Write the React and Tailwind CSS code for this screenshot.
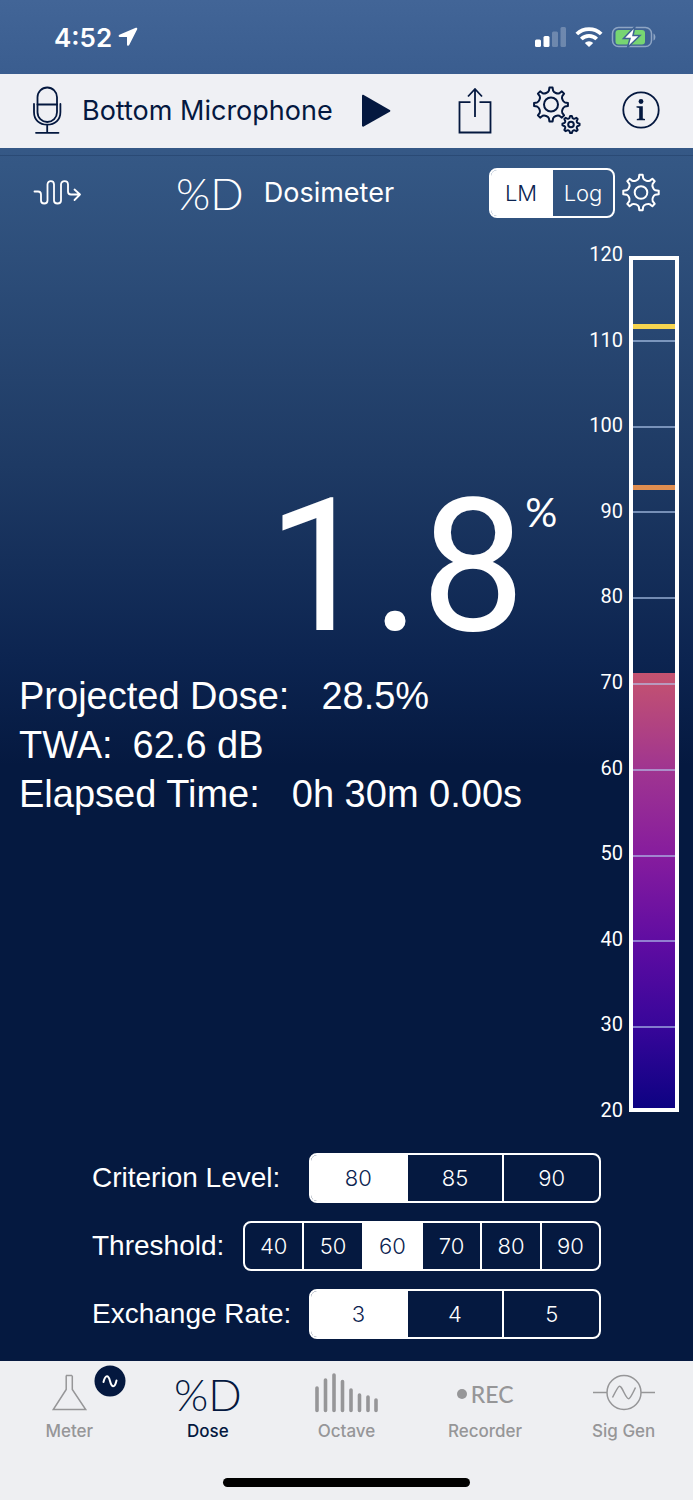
import { useState } from 'react';

const SCALE_MIN = 20;
const SCALE_MAX = 120;
const SCALE_LABELS = [120, 110, 100, 90, 80, 70, 60, 50, 40, 30, 20];

const toPercent = (db) => `${((db - SCALE_MIN) / (SCALE_MAX - SCALE_MIN)) * 100}%`;

// Outline of a cog: narrow teeth with scooped valleys between them
function gearPath(cx, cy, outer, inner, teeth) {
    const at = (angle, r) => `${(cx + r * Math.sin(angle)).toFixed(2)} ${(cy - r * Math.cos(angle)).toFixed(2)}`;
    const step = (Math.PI * 2) / teeth;
    let d = '';
    for (let i = 0; i < teeth; i++) {
        const a = i * step;
        d += `${i === 0 ? 'M' : 'L'}${at(a - step * 0.12, outer)} `;
        d += `L${at(a + step * 0.12, outer)} `;
        d += `L${at(a + step * 0.19, inner + 1)} `;
        d += `C${at(a + step * 0.3, inner - 0.8)} ${at(a + step * 0.7, inner - 0.8)} ${at(a + step * 0.81, inner + 1)} `;
    }
    return d + 'Z';
}

function GearIcon() {
    return (
        <svg viewBox="0 0 40 40" className="h-10 w-10" fill="none" stroke="currentColor" strokeWidth="2" strokeLinejoin="round">
            <path d={gearPath(20, 19.5, 17.8, 13.5, 8)} />
            <circle cx="20" cy="19.5" r="6.3" />
        </svg>
    );
}

function GearsIcon() {
    return (
        <svg viewBox="0 0 50 50" className="h-[50px] w-[50px]" fill="none" stroke="currentColor" strokeWidth="2" strokeLinejoin="round">
            <path d={gearPath(19, 19.5, 17, 13, 8)} />
            <circle cx="19" cy="19.5" r="7" />
            <path d={gearPath(39, 39.5, 8.6, 6.8, 8)} />
            <circle cx="39" cy="39.5" r="2.8" />
        </svg>
    );
}

function StatusBar() {
    return (
        <div className="flex h-[74px] items-center justify-between pr-9 pl-[54px] text-white">
            <div className="flex items-center gap-1.5 font-[Inter] text-[26px] font-semibold">
                4:52
                <svg viewBox="0 0 20 20" className="h-5 w-5" fill="currentColor">
                    <path d="M17.8 0.8 1.4 7.8c-1.2.6-.9 2.2.4 2.2h7.2v7.4c0 1.4 1.6 1.7 2.2.5L19.2 2.2c.4-1-.4-1.8-1.400-1.400z" />
                </svg>
            </div>
            <div className="flex items-center gap-2">
                <svg viewBox="0 0 32 20" className="h-5 w-8" fill="currentColor">
                    <rect x="0" y="12.5" width="6" height="7.5" rx="1.5" />
                    <rect x="8.5" y="9" width="6" height="11" rx="1.5" />
                    <rect x="17" y="4.5" width="6" height="15.5" rx="1.5" opacity=".25" />
                    <rect x="25.5" y="0" width="5.5" height="20" rx="1.5" opacity=".25" />
                </svg>
                <svg viewBox="0 0 28 20" className="h-5 w-7" fill="none" stroke="currentColor" strokeWidth="3.8">
                    <path d="M1.8 7a17.5 17.5 0 0 1 24.4 0" />
                    <path d="M6.3 12a11 11 0 0 1 15.4 0" />
                    <path d="M14 20 9.8 16a6 6 0 0 1 8.4 0z" fill="currentColor" stroke="none" />
                </svg>
                <svg viewBox="0 0 46 22" className="h-[22px] w-[46px]">
                    <rect x="1.5" y="1.5" width="39" height="19" rx="6" fill="none" stroke="#8ea5c4" strokeWidth="1.5" />
                    <rect x="4.5" y="4" width="29.5" height="14.5" rx="3" fill="#77d572" />
                    <path d="M42.5 7.5v7c2.5-1 2.5-6 0-7z" fill="#8ea5c4" />
                    <path d="M24 0.5 12.5 12.5H19L16.5 21.5 29 9.5H22z" fill="#fff" stroke="#3f6293" strokeWidth="1.5" />
                </svg>
            </div>
        </div>
    );
}

function Toolbar() {
    return (
        <header className="flex h-[74px] items-center bg-[#eff0f4] pr-[33px] pl-8 text-[#04183f]">
            <button type="button" aria-label="Input" className="mr-5">
                <svg viewBox="0 0 30 50" className="h-[50px] w-[30px]" fill="none" stroke="currentColor" strokeWidth="1.8" strokeLinecap="round">
                    <rect x="5.5" y="1.5" width="19.5" height="34.5" rx="9.7" />
                    <path d="M5.5 18.5H25M2 18v8c0 8 5.5 12.7 13.2 12.7s13.2-4.7 13.2-12.7v-8M15.2 39v7.500M4 46.8h22.5" />
                </svg>
            </button>
            <h1 className="font-[Inter] text-[27px]">Bottom Microphone</h1>
            <button type="button" aria-label="Play" className="ml-7">
                <svg viewBox="0 0 32 34" className="h-[34px] w-8" fill="currentColor">
                    <path d="M1 2c0-1 .8-1.5 1.7-1L28.8 16c.8.5.8 1.2 0 1.7L2.7 32.500c-.9.5-1.7 0-1.7-1z" />
                </svg>
            </button>
            <div className="ml-auto flex items-center gap-10 pb-0.5">
                <button type="button" aria-label="Share">
                    <svg viewBox="0 0 34 48" className="h-12 w-[34px]" fill="none" stroke="currentColor" strokeWidth="1.8">
                        <path d="M12.5 16.2H1.5V46.5h31V16.2h-11M17 31V3M10 10.500l7-7.500 7 7.500" />
                    </svg>
                </button>
                <button type="button" aria-label="Settings">
                    <GearsIcon />
                </button>
                <button type="button" aria-label="Info">
                    <svg viewBox="0 0 38 38" className="h-[38px] w-[38px]">
                        <circle cx="19" cy="19" r="17.7" fill="none" stroke="currentColor" strokeWidth="1.8" />
                        <circle cx="19" cy="10.5" r="2.4" fill="currentColor" />
                        <path d="M14.5 15.2h6.3v12.3l2.2.6v1.2h-8.2v-1.2l2.4-.6V17l-2.7-.6z" fill="currentColor" />
                    </svg>
                </button>
            </div>
        </header>
    );
}

function Segmented({ label, options, value, onChange, className }) {
    return (
        <div role="group" aria-label={label} className={`flex h-[50px] overflow-hidden rounded-lg border-2 border-white font-[Inter] text-[22px] font-light ${className}`}>
            {options.map((option, i) => (
                <button
                    key={option}
                    type="button"
                    aria-pressed={option === value}
                    onClick={() => onChange(option)}
                    className={`flex-1 ${i > 0 ? 'border-l-2 border-white' : ''} ${option === value ? 'bg-white text-[#0b2350]' : 'text-white'}`}
                >
                    {option}
                </button>
            ))}
        </div>
    );
}

function LevelMeter({ level, peaks }) {
    return (
        <div className="flex gap-[6px]">
            <div className="-mt-3 -mb-2 flex flex-col justify-between text-right font-[Roboto] text-[20px] leading-5 text-white">
                {SCALE_LABELS.map((db) => (
                    <span key={db}>{db}</span>
                ))}
            </div>
            <div className="relative w-[50px] border-4 border-white">
                <div
                    className="absolute inset-x-0 bottom-0 bg-[linear-gradient(to_top,#0d0282_0%,#38069a_19%,#5f0ca2_38%,#861c9e_58%,#a03590_78%,#c5536f_100%)]"
                    style={{ height: toPercent(level) }}
                />
                <div className="absolute inset-x-0 -inset-y-1 flex flex-col">
                    {SCALE_LABELS.slice(1, -1).map((db) => (
                        <div key={db} className="flex-1 border-b-2 border-[#b4cbf0]/60" />
                    ))}
                    <div className="flex-1" />
                </div>
                {peaks.map((peak) => (
                    <div key={peak.db} className={`absolute inset-x-0 h-[5px] ${peak.color}`} style={{ bottom: toPercent(peak.db) }} />
                ))}
            </div>
        </div>
    );
}

function PercentD() {
    return <span className="font-[Lato] text-[44px] leading-none font-light">%D</span>;
}

const TABS = [
    {
        name: 'Meter',
        icon: (
            <svg viewBox="0 0 40 40" className="h-10 w-10" fill="none" stroke="currentColor" strokeWidth="1.5">
                <path d="M17 1.5h6M17.2 1.5v14L4.3 35.5h32.4L23.3 15.5v-14" />
            </svg>
        ),
    },
    { name: 'Dose', icon: <PercentD /> },
    {
        name: 'Octave',
        icon: (
            <svg viewBox="0 0 64 42" className="h-[42px] w-16" stroke="currentColor" strokeWidth="3.6" strokeLinecap="round">
                <path d="M3 15v22.5M11.5 7v30.5M20 2v35.5M28.5 8.5v29M37 17v20.5M45.5 22v15.5M54 24v13.5M62 27v10.5" />
            </svg>
        ),
    },
    {
        name: 'Recorder',
        icon: (
            <span className="flex items-center gap-1 font-[Lato] text-[23px] leading-none">
                <span className="h-[10px] w-[10px] rounded-full bg-current" />
                REC
            </span>
        ),
    },
    {
        name: 'Sig Gen',
        icon: (
            <svg viewBox="0 0 64 40" className="h-10 w-16" fill="none" stroke="currentColor" strokeWidth="1.5">
                <circle cx="32" cy="18.5" r="17" />
                <path d="M1 18.5h14M49 18.5h14M20.500 23.500c7-14 7-14 11.500-5s5 9 11.500-5" />
            </svg>
        ),
    },
];

function TabBar() {
    return (
        <footer className="flex flex-col items-center bg-[#eeeff2] pb-[13px]">
            <nav className="grid w-full grid-cols-5">
                {TABS.map((tab) => (
                    <button
                        key={tab.name}
                        type="button"
                        className={`relative flex flex-col items-center font-[Inter] text-[17px] leading-6 font-medium ${tab.name === 'Dose' ? 'text-[#04183f]' : 'text-[#969698]'}`}
                    >
                        <span className="flex h-[58px] items-center pt-2">{tab.icon}</span>
                        {tab.name}
                        {tab.name === 'Meter' && (
                            <svg viewBox="0 0 32 32" className="absolute top-1 left-[94px] h-8 w-8">
                                <circle cx="16" cy="16" r="15.5" fill="#04183f" />
                                <path d="M9.5 17c2-8 5-7 6.500-1s4.500 8 6.500-.5" fill="none" stroke="#fff" strokeWidth="2" strokeLinecap="round" />
                            </svg>
                        )}
                    </button>
                ))}
            </nav>
            <div className="mt-[35px] h-[9px] w-[247px] rounded-full bg-black" />
        </footer>
    );
}

export default function App() {
    const [view, setView] = useState('LM');
    const [criterion, setCriterion] = useState('80');
    const [threshold, setThreshold] = useState('60');
    const [exchange, setExchange] = useState('3');

    return (
        <div className="flex min-h-screen flex-col bg-[linear-gradient(to_bottom,#426597_0%,#3a5d8f_5%,#345784_11%,#1e3a64_31%,#0c2450_44%,#051940_51%)]">
            <StatusBar />
            <Toolbar />

            <main className="mt-[7px] flex flex-1 flex-col border-t border-[#2a4a75] pb-[22px] text-white">
                <div className="flex items-center pt-3 pr-8 pl-8">
                    <button type="button" aria-label="Weighting">
                        <svg viewBox="0 0 50 28" className="h-7 w-[50px]" fill="none" stroke="currentColor" strokeWidth="1.8" strokeLinecap="round" strokeLinejoin="round">
                            <path d="M2.5 12.5h3.5c2 0 3 1 3 3v6c0 4 6.5 4 6.5 0V5.5c0-4.5 6.5-4.5 6.5 0v16c0 4 7 4 7 0V5.500c0-4.500 7-4.500 7 0v7c0 2 1 3 3 3h9M42.5 10.500l5.500 5-5.500 5.500" />
                        </svg>
                    </button>
                    <div className="ml-[94px]">
                        <PercentD />
                    </div>
                    <h2 className="ml-5 font-[Inter] text-[27px]">Dosimeter</h2>
                    <Segmented label="View" options={['LM', 'Log']} value={view} onChange={setView} className="ml-auto w-[126px]" />
                    <button type="button" aria-label="Dosimeter settings" className="ml-1.5">
                        <GearIcon />
                    </button>
                </div>

                <div className="mt-[38px] flex h-[856px] justify-between pr-[14px] pl-[19px]">
                    <div className="flex flex-1 flex-col pt-[220px] font-['Liberation_Sans']">
                        <div className="flex items-start justify-end pr-8">
                            <span className="font-[Roboto] text-[186px] leading-[180px]">1.8</span>
                            <span className="pt-4 font-[Lato] text-[40px] leading-none">%</span>
                        </div>
                        <dl className="mt-4 text-[38px] leading-[49px]">
                            <div className="flex gap-8">
                                <dt>Projected Dose:</dt>
                                <dd>28.5%</dd>
                            </div>
                            <div className="flex gap-5">
                                <dt>TWA:</dt>
                                <dd>62.6 dB</dd>
                            </div>
                            <div className="flex gap-8">
                                <dt>Elapsed Time:</dt>
                                <dd>0h 30m 0.00s</dd>
                            </div>
                        </dl>
                    </div>
                    <LevelMeter
                        level={71.3}
                        peaks={[
                            { db: 111.9, color: 'bg-[#f5d44f]' },
                            { db: 92.9, color: 'bg-[#e08e50]' },
                        ]}
                    />
                </div>

                <div className="mt-auto flex flex-col gap-[18px] pr-[92px] pl-[92px] font-['Liberation_Sans'] text-[28px]">
                    <div className="flex items-center justify-between">
                        <span>Criterion Level:</span>
                        <Segmented label="Criterion Level" options={['80', '85', '90']} value={criterion} onChange={setCriterion} className="w-[292px]" />
                    </div>
                    <div className="flex items-center justify-between">
                        <span>Threshold:</span>
                        <Segmented label="Threshold" options={['40', '50', '60', '70', '80', '90']} value={threshold} onChange={setThreshold} className="w-[358px]" />
                    </div>
                    <div className="flex items-center justify-between">
                        <span>Exchange Rate:</span>
                        <Segmented label="Exchange Rate" options={['3', '4', '5']} value={exchange} onChange={setExchange} className="w-[292px]" />
                    </div>
                </div>
            </main>

            <TabBar />
        </div>
    );
}
